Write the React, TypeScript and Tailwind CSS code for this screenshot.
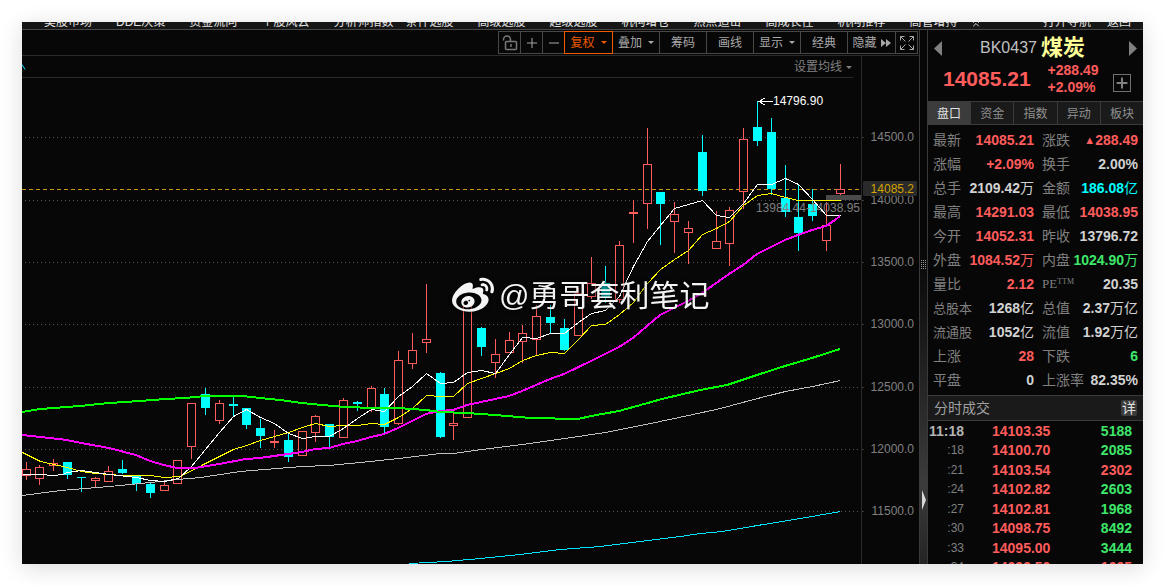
import { ChevronsUp, Minus, Plus } from "lucide-react";
import { FaWeibo } from "react-icons/fa";

const menuItems = [
  "美股市场",
  "DDE决策",
  "资金流向",
  "个股风云",
  "分析师指数",
  "条件选股",
  "高级选股",
  "超级选股",
  "机构增仓",
  "热点追击",
  "高成长性",
  "机构推荐",
  "高管增持",
];

const tools = [
  { name: "复权", menu: true, active: true },
  { name: "叠加", menu: true },
  { name: "筹码" },
  { name: "画线" },
  { name: "显示", menu: true },
  { name: "经典" },
];

const tabs = ["盘口", "资金", "指数", "异动", "板块"];

const RED = "text-[#ff5c5c]";
const GREEN = "text-[#3ee66a]";
const GREY = "text-[#d2d2d2]";
const CYAN = "text-[#00ffff]";

// label, value, colour for the left cell, then the same for the right cell
const quotes = [
  ["最新", "14085.21", RED, "涨跌", "▲288.49", RED],
  ["涨幅", "+2.09%", RED, "换手", "2.00%", GREY],
  ["总手", "2109.42万", GREY, "金额", "186.08亿", CYAN],
  ["最高", "14291.03", RED, "最低", "14038.95", RED],
  ["今开", "14052.31", RED, "昨收", "13796.72", GREY],
  ["外盘", "1084.52万", RED, "内盘", "1024.90万", GREEN],
  ["量比", "2.12", RED, "PE", "20.35", GREY],
  ["总股本", "1268亿", GREY, "总值", "2.37万亿", GREY],
  ["流通股", "1052亿", GREY, "流值", "1.92万亿", GREY],
  ["上涨", "28", RED, "下跌", "6", GREEN],
  ["平盘", "0", GREY, "上涨率", "82.35%", GREY],
];

const ticks = [
  ["11:18", "14103.35", "5188", GREEN],
  [":18", "14100.70", "2085", GREEN],
  [":21", "14103.54", "2302", RED],
  [":24", "14102.82", "2603", GREEN],
  [":27", "14102.81", "1968", GREEN],
  [":30", "14098.75", "8492", GREEN],
  [":33", "14095.00", "3444", GREEN],
  [":34", "14099.50", "1095", RED],
];

// high, body top, body bottom, low, rising
const candles = [
  [462, 469, 476, 480, 1],
  [465, 467, 479, 485, 1],
  [459, 463, 466, 471, 1],
  [462, 462, 475, 479, 0],
  [477, 477, 478, 492, 0],
  [477, 478, 481, 487, 1],
  [466, 471, 482, 482, 1],
  [460, 469, 473, 474, 0],
  [476, 476, 484, 491, 0],
  [483, 484, 493, 498, 0],
  [482, 485, 491, 491, 1],
  [460, 460, 484, 484, 1],
  [403, 403, 447, 459, 1],
  [388, 394, 408, 415, 0],
  [400, 403, 421, 424, 1],
  [397, 404, 406, 416, 0],
  [408, 408, 425, 429, 0],
  [419, 428, 436, 448, 0],
  [430, 441, 443, 448, 1],
  [434, 440, 457, 462, 0],
  [431, 431, 456, 456, 1],
  [415, 416, 433, 442, 1],
  [424, 424, 437, 447, 0],
  [398, 400, 438, 438, 1],
  [401, 402, 404, 411, 0],
  [386, 388, 409, 412, 1],
  [388, 394, 427, 433, 0],
  [351, 360, 424, 425, 1],
  [333, 350, 364, 369, 1],
  [284, 339, 343, 353, 1],
  [372, 373, 437, 438, 0],
  [411, 423, 426, 440, 1],
  [306, 306, 418, 418, 1],
  [327, 328, 347, 356, 0],
  [339, 354, 363, 378, 1],
  [332, 340, 353, 353, 1],
  [325, 333, 342, 363, 1],
  [305, 316, 340, 355, 1],
  [305, 317, 323, 334, 0],
  [319, 328, 350, 351, 0],
  [288, 293, 336, 336, 1],
  [257, 283, 297, 299, 1],
  [266, 283, 298, 303, 0],
  [241, 245, 300, 303, 1],
  [200, 212, 214, 243, 1],
  [128, 164, 204, 229, 1],
  [192, 192, 204, 245, 0],
  [202, 214, 222, 253, 1],
  [221, 228, 233, 264, 1],
  [135, 152, 191, 196, 0],
  [211, 241, 249, 249, 1],
  [207, 210, 244, 266, 1],
  [128, 139, 192, 209, 1],
  [101, 127, 141, 146, 0],
  [118, 132, 189, 195, 0],
  [165, 198, 212, 217, 0],
  [184, 217, 233, 251, 0],
  [189, 204, 216, 221, 0],
  [202, 225, 241, 251, 1],
  [164, 189, 194, 195, 1],
];

const averages = [
  {
    color: "#c0c0c0",
    width: 1,
    points:
      "22,495 60,490 109,486 150,482 177,479 200,477 240,471 264,469 302,466 328,465 370,461 398,458 440,453 453,453 481,449 522,444 564,438 605,432 650,423 688,415 720,408 757,398 785,391 812,386 840,380",
  },
  {
    color: "#00e5ff",
    width: 1,
    points:
      "409,563 446,561 480,558 520,554 560,549 600,546 640,541 680,536 700,533 722,531 757,525 800,518 840,511",
  },
  {
    color: "#ffff00",
    width: 1,
    points:
      "22,452 40,461 67,467 81,471 95,473 109,474 122,475 150,475 164,477 180,476 205,463 219,456 233,449 246,445 260,440 288,432 302,427 315,423 329,426 343,425 357,425 371,423 384,424 398,417 412,408 426,395 440,396 453,396 467,383 481,378 495,373 509,368 522,360 536,355 550,352 564,353 578,339 591,325 605,324 619,314 633,302 647,283 660,269 674,259 688,250 702,234 716,228 729,221 743,205 757,195 771,193 785,197 798,200 840,200",
  },
  {
    color: "#ffffff",
    width: 1,
    points:
      "22,474 40,474 53,475 62,474 67,472 81,470 95,472 109,474 136,477 150,480 164,481 178,478 191,466 205,449 219,432 233,416 246,409 260,417 274,423 288,433 302,438 315,436 329,436 343,428 357,418 371,409 384,411 398,396 412,386 426,373 440,383 453,382 467,372 481,370 495,373 509,354 522,337 536,338 550,333 564,333 578,322 591,313 605,310 619,296 633,266 647,241 660,225 674,208 702,200 716,215 729,217 743,203 757,184 771,184 785,178 798,184 812,199 826,215 840,215",
  },
  {
    color: "#ff00ff",
    width: 2,
    points:
      "22,435 40,437 67,440 81,443 109,448 136,455 150,461 164,465 177,468 195,468 219,464 246,459 260,458 274,456 288,454 302,452 315,449 329,448 343,444 357,441 371,437 384,434 398,428 412,421 426,414 440,411 453,410 467,405 481,402 509,396 522,391 536,385 550,379 564,374 591,361 605,354 619,347 633,338 654,320 660,315 688,301 702,293 729,274 743,265 757,254 771,247 785,240 798,235 812,230 826,226 835,220 840,216",
  },
  {
    color: "#00ff00",
    width: 2,
    points:
      "22,412 40,409 80,406 109,403 140,401 165,399 185,398 205,396 243,396 260,398 280,400 302,403 322,405 345,407 375,408 398,408 412,409 426,410 440,412 467,413 495,415 519,417 531,418 578,419 591,416 619,411 662,399 700,390 727,385 757,375 785,366 812,358 840,349",
  },
];

const grid = [
  { y: 137, label: "14500.0" },
  { y: 200, label: "14000.0" },
  { y: 262, label: "13500.0" },
  { y: 324, label: "13000.0" },
  { y: 387, label: "12500.0" },
  { y: 449, label: "12000.0" },
  { y: 511, label: "11500.0" },
];

function Caret() {
  return (
    <svg width="6" height="3" viewBox="0 0 6 3" className="fill-current">
      <path d="M0 0h6L3 3z" />
    </svg>
  );
}

function OpenLock() {
  return (
    <svg width="16" height="16" viewBox="0 0 16 16" fill="none" stroke="#777777">
      <path d="M1.5 5.5V4.5a3.5 3.5 0 0 1 7 0v2" strokeWidth="1.5" />
      <rect x="3.5" y="6.5" width="11" height="8" rx="1" strokeWidth="1.5" />
      <path d="M9 9v3" strokeWidth="1.5" />
    </svg>
  );
}

function Candle({ index }: { index: number }) {
  const [high, top, bottom, low, rising] = candles[index];
  const x = Math.ceil(25.1 + 13.8 * index);
  if (!rising) {
    return (
      <g fill="#00ffff">
        <rect x={x} y={high} width={1} height={low - high} />
        <rect x={x - 4} y={top} width={9} height={bottom - top} />
      </g>
    );
  }
  return (
    <g fill="#ff5c5c">
      <rect x={x} y={high} width={1} height={top - high} />
      <rect x={x} y={bottom} width={1} height={low - bottom} />
      <path
        fillRule="evenodd"
        d={`M${x - 4} ${top}h9v${bottom - top}h-9z M${x - 3} ${top + 1}v${bottom - top - 2}h7v-${bottom - top - 2}z`}
      />
    </g>
  );
}

function Plot() {
  return (
    <svg
      viewBox="22 78 839 486"
      preserveAspectRatio="xMaxYMid slice"
      className="block h-full w-full"
      shapeRendering="crispEdges"
    >
      {grid.map((g) => (
        <path key={g.y} d={`M25 ${g.y}.5H861`} stroke="#555555" strokeDasharray="1 3" />
      ))}
      <path d="M22 189.5H861" stroke="#c8960c" strokeDasharray="4 3" />
      <rect x="826" y="195" width="35" height="5" fill="#4a4a4a" />
      {candles.map((_, i) => (
        <Candle key={i} index={i} />
      ))}
      <text x="860" y="212" textAnchor="end" fontSize="12" fill="#808080">
        13984.44-14038.95
      </text>
      {averages.map((line) => (
        <polyline
          key={line.color}
          points={line.points}
          fill="none"
          stroke={line.color}
          strokeWidth={line.width}
          transform={line.width === 1 ? "translate(0.5 0.5)" : undefined}
        />
      ))}
      <path d="M773 101.5H759M765 98l-6 3.5 6 3.5" stroke="#ffffff" fill="none" />
      <text x="773" y="105" fontSize="12" fill="#ffffff">
        14796.90
      </text>
    </svg>
  );
}

function PriceAxis() {
  return (
    <svg
      viewBox="862 56 57 508"
      preserveAspectRatio="xMinYMid slice"
      className="h-full w-[57px] shrink-0"
    >
      {grid.map((g) => (
        <g key={g.y}>
          <path d={`M862 ${g.y}.5h2`} stroke="#3a3a3a" />
          <text x="914" y={g.y + 4} textAnchor="end" fontSize="12" fill="#808080">
            {g.label}
          </text>
        </g>
      ))}
      <rect x="863" y="181" width="54" height="15" rx="1" fill="#2a2a2a" />
      <text x="914" y="193" textAnchor="end" fontSize="12" fill="#d2a000">
        14085.2
      </text>
    </svg>
  );
}

function Toolbar() {
  return (
    <div className="flex h-[26px] shrink-0 justify-end border-b border-[#2a2a2a] pt-px pr-px pb-px">
      <div className="flex h-[23px] border border-[#484848] text-xs text-[#a8a8a8]">
        <button aria-label="锁定" className="flex w-[21px] items-center justify-center">
          <OpenLock />
        </button>
        <button
          aria-label="放大"
          className="flex w-[22px] items-center justify-center border-l border-[#484848]"
        >
          <Plus size={16} strokeWidth={1.5} />
        </button>
        <button
          aria-label="缩小"
          className="flex w-[22px] items-center justify-center border-l border-[#484848]"
        >
          <Minus size={16} strokeWidth={1.5} />
        </button>
        {tools.map((tool) => (
          <button
            key={tool.name}
            className={
              tool.active
                ? "-my-px flex w-[49px] items-center justify-center gap-1.5 border border-[#f05a00] text-[#f05a00]"
                : "flex w-[47px] items-center justify-center gap-1.5 border-r border-[#484848]"
            }
          >
            {tool.name}
            {tool.menu && <Caret />}
          </button>
        ))}
        <button className="flex w-[47px] items-center justify-center gap-1">
          隐藏
          <svg width="10" height="8" viewBox="0 0 10 8" className="fill-current">
            <path d="M0 0l5 4-5 4zM5 0l5 4-5 4z" />
          </svg>
        </button>
        <button
          aria-label="全屏"
          className="flex w-[22px] items-center justify-center border-l border-[#484848]"
        >
          <svg width="14" height="14" viewBox="0 0 14 14" fill="none" stroke="currentColor">
            <path d="M.5 4.500v-4h4M.5.5l5 5M9.500.5h4v4M13.500.5l-5 5M.5 9.500v4h4M.5 13.500l5-5M9.500 13.500h4v-4M13.500 13.500l-5-5" />
          </svg>
        </button>
      </div>
    </div>
  );
}

function Chart() {
  return (
    <div className="flex min-h-0 flex-1">
      <div className="flex min-w-0 flex-1 flex-col border-r border-[#2a2a2a]">
        <div className="mr-2 flex h-[22px] shrink-0 items-center justify-between border-b border-[#2a2a2a]">
          <svg width="4" height="6" viewBox="0 0 4 6" fill="none" stroke="#00e5ff">
            <path d="M0 .5l3 5" />
          </svg>
          <button className="flex items-center gap-1 pt-px pr-px text-xs text-[#808080]">
            设置均线
            <Caret />
          </button>
        </div>
        <div className="relative min-h-0 flex-1">
          <Plot />
          <div className="absolute top-[195px] left-[430px] flex items-center gap-[5px] text-[#f4f4f4] drop-shadow-[0_0_2px_#000000]">
            <FaWeibo size={42} />
            <span className="text-[30px] leading-[46px] whitespace-nowrap">@勇哥套利笔记</span>
          </div>
        </div>
      </div>
      <PriceAxis />
    </div>
  );
}

function Splitter() {
  return (
    <div className="flex w-2 shrink-0 flex-col items-center border-l border-[#3a3a3a] bg-linear-to-b from-[#070707] from-40% via-[#3c3c3c] via-85% to-[#242424]">
      <div className="flex flex-1 items-center pt-2">
        <svg width="5" height="9" viewBox="0 0 5 9" stroke="#9a9a9a" strokeDasharray="1 1">
          <path d="M.5 0v9M2.500 0v9M4.500 0v9" />
        </svg>
      </div>
      <svg width="4" height="20" viewBox="0 0 4 20" fill="#d8d8d8" className="mb-[54px]">
        <path d="M0 0l4 10-4 10z" />
      </svg>
    </div>
  );
}

function QuoteHead() {
  return (
    <div className="flex h-[71px] flex-col px-1.5 pt-1.5">
      <div className="flex h-6 items-center justify-between">
        <button aria-label="上一个">
          <svg width="8" height="15" viewBox="0 0 8 15" fill="#808080">
            <path d="M8 0v15L0 7.500z" />
          </svg>
        </button>
        <h1 className="flex items-center gap-1 pr-1.5 text-base leading-6 text-[#c0c0c0]">
          BK0437
          <span className="text-[22px] font-bold text-[#ffff99]">煤炭</span>
        </h1>
        <button aria-label="下一个">
          <svg width="8" height="15" viewBox="0 0 8 15" fill="#808080">
            <path d="M0 0v15l8-7.500z" />
          </svg>
        </button>
      </div>
      <div className="flex items-center pt-0.5 pr-1.5 pl-[9px] font-bold text-[#ff5c5c]">
        <span className="text-[21px]">14085.21</span>
        <div className="ml-[17px] text-sm leading-[17px]">
          <p>+288.49</p>
          <p>+2.09%</p>
        </div>
        <button
          aria-label="加自选"
          className="mt-2 ml-auto flex h-[18px] w-[18px] items-center justify-center border border-[#707070] text-[#808080]"
        >
          <Plus size={16} strokeWidth={3} />
        </button>
      </div>
    </div>
  );
}

function Label({ text }: { text: string }) {
  if (text === "PE") {
    return (
      <span className="flex items-start font-[Liberation_Serif] text-[13px] leading-6">
        PE<span className="text-[8px] leading-5">TTM</span>
      </span>
    );
  }
  return <span className={text === "总股本" || text === "流通股" ? "text-[13px]" : ""}>{text}</span>;
}

// the units stay in regular weight beside the bold figure
function Value({ text, color }: { text: string; color: string }) {
  const figure = text.replace(/[▲万亿]/g, "");
  const unit = text.replace(/[^万亿]/g, "");
  return (
    <dd className={`flex items-center font-bold ${color}`}>
      {text.startsWith("▲") && <span className="text-[11px]">▲</span>}
      {figure}
      {unit && <span className="font-normal">{unit}</span>}
    </dd>
  );
}

function QuotePanel() {
  return (
    <aside className="flex w-[216px] shrink-0 flex-col border-l border-[#3a3a3a]">
      <QuoteHead />
      <div role="tablist" className="flex h-6 shrink-0 border-y border-[#3a3a3a] text-xs">
        {tabs.map((tab, i) => (
          <button
            key={tab}
            role="tab"
            aria-selected={i === 0}
            className={
              i === 0
                ? "flex-1 bg-[#3c3c3c] pt-px text-[#e0e0e0]"
                : "flex-1 border-l border-[#3a3a3a] bg-[#1a1a1a] pt-px text-[#909090]"
            }
          >
            {tab}
          </button>
        ))}
      </div>
      <dl className="shrink-0 py-[3px] pr-[5px] pl-[5px] text-sm leading-6 text-[#808080]">
        {quotes.map(([l1, v1, c1, l2, v2, c2]) => (
          <div key={l1} className="flex h-6 gap-2">
            <div className="flex w-[101px] justify-between whitespace-nowrap">
              <dt>
                <Label text={l1} />
              </dt>
              <Value text={v1} color={c1} />
            </div>
            <div className="flex min-w-0 flex-1 justify-between whitespace-nowrap">
              <dt>
                <Label text={l2} />
              </dt>
              <Value text={v2} color={c2} />
            </div>
          </div>
        ))}
      </dl>
      <div className="flex h-[26px] shrink-0 items-center justify-between border-y border-[#3a3a3a] bg-[#1a1a1a] pr-1.5 pl-1.5 text-sm text-[#a0a0a0]">
        <h2>分时成交</h2>
        <button className="h-4 w-4 rounded-xs bg-[#3c3c3c] leading-4 text-[#e0e0e0]">详</button>
      </div>
      <div className="min-h-0 flex-1 overflow-hidden">
        <table className="w-full text-sm leading-[19px] font-bold">
          <tbody>
            {ticks.map(([time, price, volume, color], i) => (
              <tr key={time + i} className="odd:h-5 even:h-[19px]">
                <td
                  className={
                    i === 0
                      ? "w-9 p-0 text-right text-[#b4b4b4]"
                      : "w-9 p-0 text-right text-xs leading-[19px] font-normal text-[#808080]"
                  }
                >
                  {time}
                </td>
                <td className={`p-0 pl-7 ${RED}`}>{price}</td>
                <td className={`p-0 pr-[11px] text-right ${color}`}>{volume}</td>
              </tr>
            ))}
          </tbody>
        </table>
      </div>
    </aside>
  );
}

export default function App() {
  return (
    <div className="h-screen bg-white p-[22px] font-['Liberation_Sans','Noto_Sans_CJK_SC',sans-serif]">
      <div className="flex h-full flex-col overflow-hidden bg-[#070707] shadow-[0_4px_22px_rgba(0,0,0,0.14)]">
        <nav className="flex h-2 shrink-0 items-end gap-6 overflow-hidden border-b border-[#484848] bg-[#161616] pr-3 pl-[22px] text-xs leading-[14px] whitespace-nowrap text-[#e0e0e0]">
          {menuItems.map((item) => (
            <a
              key={item}
              href="#"
              className={item === "分析师指数" ? "-mr-3 shrink-0" : "min-w-12 shrink-0"}
            >
              {item}
            </a>
          ))}
          <button aria-label="更多" className="-ml-3 shrink-0">
            <ChevronsUp size={12} />
          </button>
          <a href="#" className="ml-auto shrink-0">
            打开导航
          </a>
          <a href="#" className="-ml-2 shrink-0">
            返回
          </a>
        </nav>
        <div className="flex min-h-0 flex-1">
          <main className="flex min-w-0 flex-1 flex-col">
            <Toolbar />
            <Chart />
          </main>
          <Splitter />
          <QuotePanel />
        </div>
      </div>
    </div>
  );
}
